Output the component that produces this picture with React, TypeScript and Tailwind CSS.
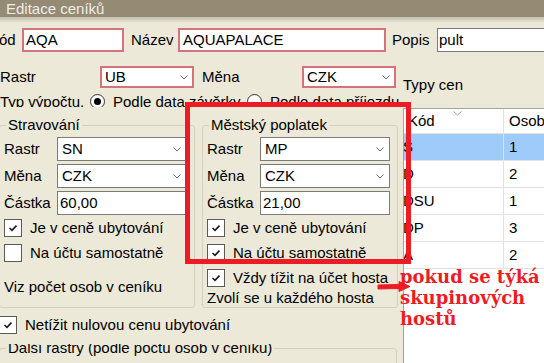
import React from "react";

function Chevron() {
  return (
    <svg width="8" height="5" viewBox="0 0 8 5" className="shrink-0">
      <path d="M0.5 0.5 L4 4 L7.5 0.5" fill="none" stroke="#6f6f6f" strokeWidth="1" />
    </svg>
  );
}

function Select({ value, w, red = false, h = "h-[24px]" }: { value: string; w: string; red?: boolean; h?: string }) {
  return (
    <div
      className={`flex items-center justify-between bg-white shrink-0 ${h} ${w} ${
        red ? "border-2 border-[#d5727a] pl-[3px] pr-[4px]" : "border border-[#7a7a7a] pl-[4px] pr-[5px]"
      }`}
    >
      <span>{value}</span>
      <Chevron />
    </div>
  );
}

function Input({ value, w, red = false, pad = "pl-[2px]" }: { value: string; w: string; red?: boolean; pad?: string }) {
  return (
    <div
      className={`flex items-center bg-white shrink-0 h-[24px] ${w} ${pad} ${
        red ? "border-2 border-[#d5727a]" : "border border-[#7a7a7a]"
      }`}
    >
      <span className="whitespace-nowrap">{value}</span>
    </div>
  );
}

function CheckBox({ checked }: { checked: boolean }) {
  return (
    <div className="w-[18px] h-[18px] bg-white border border-[#5a5a5a] flex items-center justify-center shrink-0">
      {checked && (
        <svg width="10" height="8" viewBox="0 0 10 8">
          <path d="M1.5 4 L4 6.4 L8.5 1.6" fill="none" stroke="#1a1a1a" strokeWidth="1.6" />
        </svg>
      )}
    </div>
  );
}

function CheckRow({ checked, label }: { checked: boolean; label: string }) {
  return (
    <div className="flex items-center h-[22px] gap-[8px] whitespace-nowrap">
      <CheckBox checked={checked} />
      <span>{label}</span>
    </div>
  );
}

function Radio({ on }: { on: boolean }) {
  return (
    <div className="w-[15px] h-[15px] mt-[1px] rounded-full border border-[#333] bg-white flex items-center justify-center shrink-0">
      {on && <div className="w-[7px] h-[7px] rounded-full bg-black" />}
    </div>
  );
}

function FieldRow({ label, children }: { label: string; children: React.ReactNode }) {
  return (
    <div className="flex items-center h-[24px]">
      <span className="w-[53px] shrink-0">{label}</span>
      {children}
    </div>
  );
}

function Group({
  title,
  className,
  children,
}: {
  title: string;
  className: string;
  children: React.ReactNode;
}) {
  return (
    <fieldset
      className={`border border-[#d3d0c3] rounded-[3px] w-[196px] h-[192px] pl-[4px] pr-[6px] shrink-0 ${className}`}
    >
      <legend className="ml-[2px] px-[2px] leading-[18px] whitespace-nowrap">{title}</legend>
      <div className="h-[173px] overflow-hidden flex flex-col">{children}</div>
    </fieldset>
  );
}

const rows = [
  { code: "S", n: "1", sel: true },
  { code: "D", n: "2", sel: false },
  { code: "DSU", n: "1", sel: false },
  { code: "DP", n: "3", sel: false },
  { code: "A", n: "2", sel: false },
];

export default function App() {
  return (
    <div className="relative w-[544px] h-[363px] overflow-hidden bg-[#ece9d8] flex flex-col font-['Liberation_Sans',Arial,sans-serif] text-[15px] leading-[18px] text-black">
      {/* title bar */}
      <div className="h-[17px] shrink-0 bg-[#958a73] pl-[6px] text-[#f1ede3] whitespace-nowrap">Editace ceníků</div>
      <div className="h-[6px] shrink-0 bg-linear-to-b from-[#c2bba9] to-[#ece9d8]" />

      {/* row 1 */}
      <div className="mt-[5px] h-[24px] flex items-center whitespace-nowrap shrink-0">
        <span className="ml-[-11px] w-[33px] shrink-0">Kód</span>
        <Input value="AQA" w="w-[102px]" red />
        <span className="ml-[7px] w-[47px] shrink-0">Název</span>
        <Input value="AQUAPALACE" w="w-[208px]" red pad="pl-[3px]" />
        <span className="ml-[6px] w-[45px] shrink-0">Popis</span>
        <Input value="pult" w="w-[130px]" pad="pl-[1px]" />
      </div>

      {/* body */}
      <div className="mt-[14px] flex flex-1 min-h-0">
        {/* left column */}
        <div className="w-[403px] shrink-0 flex flex-col">
          <div className="h-[22px] flex items-center">
            <span className="w-[100px] shrink-0">Rastr</span>
            <Select value="UB" w="w-[94px]" h="h-[22px]" red />
            <span className="ml-[8px] w-[100px] shrink-0">Měna</span>
            <Select value="CZK" w="w-[94px]" h="h-[22px]" red />
          </div>

          <div className="mt-[5px] h-[14px] overflow-hidden flex items-start whitespace-nowrap shrink-0">
            <span className="w-[90px] shrink-0">Typ výpočtu.</span>
            <Radio on />
            <span className="ml-[8px] w-[134px] shrink-0">Podle data závěrky</span>
            <Radio on={false} />
            <span className="ml-[8px]">Podle data příjezdu</span>
          </div>

          <div className="mt-[9px] flex shrink-0">
            <Group title="Stravování" className="ml-[-1px]">
              <div className="flex flex-col pt-[3px] gap-[3px]">
                <FieldRow label="Rastr">
                  <Select value="SN" w="w-[130px]" />
                </FieldRow>
                <FieldRow label="Měna">
                  <Select value="CZK" w="w-[130px]" />
                </FieldRow>
                <FieldRow label="Částka">
                  <Input value="60,00" w="w-[130px]" />
                </FieldRow>
              </div>
              <div className="mt-[2px] flex flex-col gap-[3px]">
                <CheckRow checked label="Je v ceně ubytování" />
                <CheckRow checked={false} label="Na účtu samostatně" />
              </div>
              <div className="mt-[14px] whitespace-nowrap">Viz počet osob v ceníku</div>
            </Group>

            <Group title="Městský poplatek" className="ml-[7px]">
              <div className="flex flex-col pt-[3px] gap-[3px]">
                <FieldRow label="Rastr">
                  <Select value="MP" w="w-[130px]" />
                </FieldRow>
                <FieldRow label="Měna">
                  <Select value="CZK" w="w-[130px]" />
                </FieldRow>
                <FieldRow label="Částka">
                  <Input value="21,00" w="w-[130px]" />
                </FieldRow>
              </div>
              <div className="mt-[2px] flex flex-col gap-[3px]">
                <CheckRow checked label="Je v ceně ubytování" />
                <CheckRow checked label="Na účtu samostatně" />
                <CheckRow checked label="Vždy tížit na účet hosta" />
              </div>
              <div className="whitespace-nowrap">Zvolí se u každého hosta</div>
            </Group>
          </div>

          <div className="mt-[6px] ml-[-1px] shrink-0">
            <CheckRow checked label="Netížit nulovou cenu ubytování" />
          </div>

          <fieldset className="mt-[3px] ml-[-1px] w-[398px] h-[40px] shrink-0 border border-[#d3d0c3] rounded-[3px] pl-[4px]">
            <legend className="ml-[2px] px-[2px] leading-[18px] whitespace-nowrap">
              <span className="inline-block [clip-path:inset(5px_0_0_0)]">Další rastry (podle počtu osob v ceníku)</span>
            </legend>
          </fieldset>
        </div>

        {/* right column */}
        <div className="flex-1 min-w-0 flex flex-col">
          <div className="mt-[10px] whitespace-nowrap">Typy cen</div>
          <div className="mt-[14px] flex-1 bg-white border-l border-t border-[#a3a3a3] overflow-hidden">
            <div className="h-[25px] flex border-b border-[#e2e2e2]">
              <div className="relative w-[100px] shrink-0 border-r border-[#e2e2e2] pl-[4px] flex items-center">
                Kód
                <svg
                  width="9"
                  height="5"
                  viewBox="0 0 9 5"
                  className="absolute left-[49px] top-[2px]"
                >
                  <path d="M0.5 0.5 L4.5 4 L8.5 0.5" fill="none" stroke="#a0a0a0" strokeWidth="1" />
                </svg>
              </div>
              <div className="pl-[5px] flex items-center whitespace-nowrap">Osob</div>
            </div>
            {rows.map((r) => (
              <div
                key={r.code}
                className={`h-[27px] flex border-b border-[#e2e2e2] ${r.sel ? "bg-[#9fcbfa]" : "bg-white"}`}
              >
                <div className="w-[100px] shrink-0 border-r border-[#e2e2e2] flex items-center overflow-hidden">
                  <span className="ml-[-1px]">{r.code}</span>
                </div>
                <div className="pl-[5px] flex items-center">{r.n}</div>
              </div>
            ))}
          </div>
        </div>
      </div>

      {/* annotations */}
      <div className="absolute left-[185px] top-[102px] w-[226px] h-[162px] border-[5px] border-[#ed1c24]" />
      <svg width="34" height="13" viewBox="0 0 34 13" className="absolute left-[377px] top-[280px]">
        <path
          d="M1 5 L22 4.5 L22 1.5 L33 6.5 L22 11.5 L22 8.5 L1 9 Z"
          fill="#ed1c24"
          stroke="#ed1c24"
          strokeWidth="1"
          strokeLinejoin="round"
        />
      </svg>
      <div className="absolute left-[400px] top-[266px] font-['DejaVu_Serif',serif] font-bold text-[18px] leading-[21px] text-[#ed1c24]">
        <div className="whitespace-nowrap">pokud se týká</div>
        <div className="whitespace-nowrap">skupinových</div>
        <div className="whitespace-nowrap">hostů</div>
      </div>
    </div>
  );
}
